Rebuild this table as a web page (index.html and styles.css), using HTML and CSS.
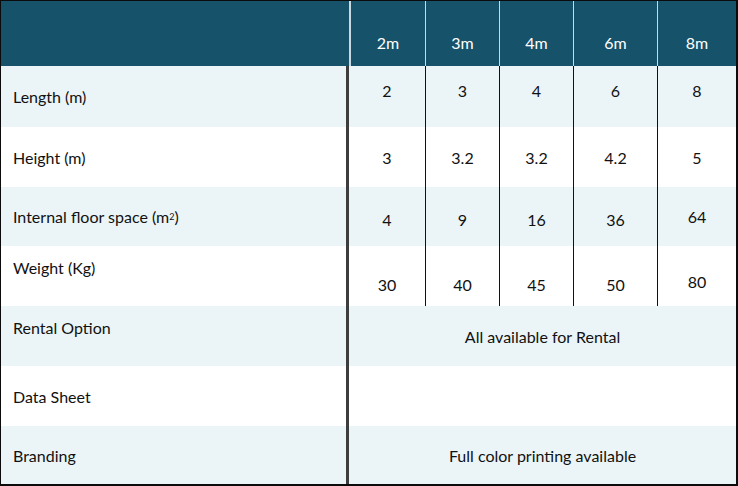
FILE: index.html
```html
<!DOCTYPE html>
<html>
<head>
<meta charset="utf-8">
<link rel="stylesheet" href="styles.css">
</head>
<body>
<div class="spec">
  <div class="hd hd-label"></div>
  <div class="hd hd-first">2m</div>
  <div class="hd">3m</div>
  <div class="hd">4m</div>
  <div class="hd">6m</div>
  <div class="hd">8m</div>

  <div class="lbl tint">Length (m)</div>
  <div class="val first tint up">2</div>
  <div class="val tint up">3</div>
  <div class="val tint up">4</div>
  <div class="val tint up">6</div>
  <div class="val tint up">8</div>

  <div class="lbl">Height (m)</div>
  <div class="val first">3</div>
  <div class="val">3.2</div>
  <div class="val">3.2</div>
  <div class="val">4.2</div>
  <div class="val">5</div>

  <div class="lbl tint">Internal floor space (m<sup>2</sup>)</div>
  <div class="val first tint down">4</div>
  <div class="val tint down">9</div>
  <div class="val tint down">16</div>
  <div class="val tint down">36</div>
  <div class="val tint">64</div>

  <div class="lbl top">Weight (Kg)</div>
  <div class="val first low">30</div>
  <div class="val low">40</div>
  <div class="val low">45</div>
  <div class="val low">50</div>
  <div class="val lowish">80</div>

  <div class="lbl tint top">Rental Option</div>
  <div class="val first span tint">All available for Rental</div>

  <div class="lbl">Data Sheet</div>
  <div class="val first span"></div>

  <div class="lbl tint">Branding</div>
  <div class="val first span tint">Full color printing available</div>
</div>
</body>
</html>
```

FILE: styles.css
```css
* { box-sizing: border-box; }
html, body { margin: 0; padding: 0; background: #ffffff; }
.spec {
  width: 738px;
  height: 486px;
  border-top: 1px solid #0b0b0b;
  border-left: 1px solid #0b0b0b;
  border-right: 2px solid #0b0b0b;
  border-bottom: 2px solid #0b0b0b;
  display: grid;
  grid-template-columns: 348px 76px 74px 74px 84px 79px;
  grid-template-rows: 65px 61px 60px 59px 60px 60px 60px 58px;
  font-family: "Lato", "Open Sans", sans-serif;
  font-size: 16px;
  color: #111111;
}
.hd {
  background: #16526a;
  color: #ffffff;
  border-left: 1px solid #c9d9df;
  display: flex;
  align-items: flex-end;
  justify-content: center;
  padding-bottom: 14px;
}
.hd-label { border-left: none; }
.hd-first { border-left: 2px solid #c9d9df; }
.lbl {
  border-right: 3px solid #3d3d3d;
  display: flex;
  align-items: center;
  padding-left: 12px;
}
.lbl.top { align-items: flex-start; padding-top: 12px; }
.lbl sup { font-size: 9px; vertical-align: 5px; line-height: 0; }
.val {
  border-left: 1px solid #111111;
  display: flex;
  align-items: center;
  justify-content: center;
}
.val.first { border-left: none; }
.val.span { grid-column: span 5; }
.tint { background: #ebf5f8; }
.up { padding-bottom: 12px; }
.down { padding-top: 6px; }
.low { padding-top: 16px; }
.lowish { padding-top: 10px; }
```
